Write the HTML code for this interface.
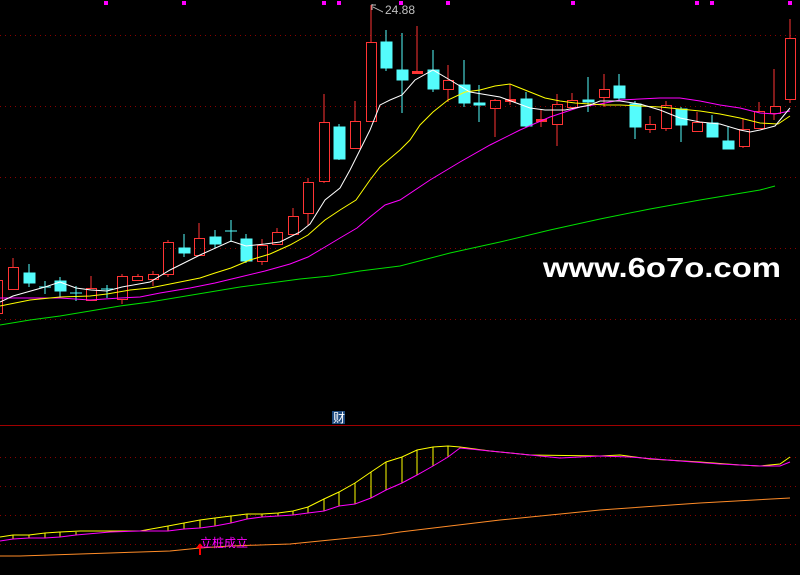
<!DOCTYPE html>
<html><head><meta charset="utf-8"><style>
html,body{margin:0;padding:0;background:#000;overflow:hidden}
svg{display:block}
</style></head><body>
<svg width="800" height="575" viewBox="0 0 800 575" xmlns="http://www.w3.org/2000/svg" shape-rendering="crispEdges">
<rect width="800" height="575" fill="#000"/>
<g stroke="#8a0000" stroke-width="1" stroke-dasharray="1,4">
<line x1="0" y1="35.5" x2="800" y2="35.5"/><line x1="0" y1="106.5" x2="800" y2="106.5"/>
<line x1="0" y1="177.5" x2="800" y2="177.5"/><line x1="0" y1="248.5" x2="800" y2="248.5"/>
<line x1="0" y1="319.5" x2="800" y2="319.5"/>
<line x1="0" y1="457.5" x2="800" y2="457.5"/><line x1="0" y1="486.5" x2="800" y2="486.5"/>
<line x1="0" y1="515.5" x2="800" y2="515.5"/><line x1="0" y1="544.5" x2="800" y2="544.5"/>
</g>
<line x1="0" y1="425.5" x2="800" y2="425.5" stroke="#a00000"/>
<g fill="#ff00ff">
<rect x="104" y="1" width="4" height="4"/><rect x="182" y="1" width="4" height="4"/><rect x="322" y="1" width="4" height="4"/><rect x="337" y="1" width="4" height="4"/><rect x="399" y="1" width="4" height="4"/><rect x="446" y="1" width="4" height="4"/><rect x="571" y="1" width="4" height="4"/><rect x="695" y="1" width="4" height="4"/><rect x="710" y="1" width="4" height="4"/><rect x="788" y="1" width="4" height="4"/>
</g>
<text x="385" y="14" fill="#c0c0c0" font-family="Liberation Sans, sans-serif" font-size="12">24.88</text>
<path d="M372 4 L372 10 M372 5 L376 5 M373 7 L383 12" stroke="#c0c0c0" fill="none"/>

<!-- red candles (hollow) -->
<g stroke="#ff3434" fill="none">
<path d="M-2 280V313M13 258V267M13 289V290M60 0"/><rect x="-8.5" y="280.5" width="11" height="33"/>
<rect x="8.5" y="267.5" width="10" height="22"/>
<path d="M91 276V288M117 0"/><rect x="86.5" y="288.5" width="10" height="12"/>
<path d="M122 274V276M122 299V304"/><rect x="117.5" y="276.5" width="10" height="23"/>
<path d="M138 274V276M138 280V281"/><rect x="132.5" y="276.5" width="10" height="4"/>
<path d="M153 271V274M153 279V286"/><rect x="148.5" y="274.5" width="10" height="5"/>
<path d="M168 240V242M168 274V277"/><rect x="163.5" y="242.5" width="10" height="32"/>
<path d="M199 223V238"/><rect x="194.5" y="238.5" width="10" height="17"/>
<path d="M262 239V245M262 261V265"/><rect x="257.5" y="245.5" width="10" height="16"/>
<path d="M277 228V232"/><rect x="272.5" y="232.5" width="10" height="12"/>
<path d="M293 208V216"/><rect x="288.5" y="216.5" width="10" height="18"/>
<path d="M308 178V182M308 213V225"/><rect x="303.5" y="182.5" width="10" height="31"/>
<path d="M324 94V122M324 181V183"/><rect x="319.5" y="122.5" width="10" height="59"/>
<path d="M355 101V121"/><rect x="350.5" y="121.5" width="10" height="27"/>
<path d="M371 5V42"/><rect x="366.5" y="42.5" width="10" height="79"/>
<path d="M417 26V73"/><rect x="412" y="71" width="11" height="3" fill="#ff3434" stroke="none"/>
<path d="M448 65V80M448 89V102"/><rect x="443.5" y="80.5" width="10" height="9"/>
<path d="M495 99V100M495 108V137"/><rect x="490.5" y="100.5" width="10" height="8"/>
<path d="M510 84V105"/><rect x="505" y="99" width="11" height="3" fill="#ff3434" stroke="none"/>
<path d="M541 110V127"/><rect x="536" y="119" width="11" height="3" fill="#ff3434" stroke="none"/>
<path d="M557 94V104M557 124V146"/><rect x="552.5" y="104.5" width="10" height="20"/>
<path d="M572 93V100M572 107V108"/><rect x="567.5" y="100.5" width="10" height="7"/>
<path d="M604 74V89M604 97V107"/><rect x="599.5" y="89.5" width="10" height="8"/>
<path d="M650 116V124M650 129V133"/><rect x="645.5" y="124.5" width="10" height="5"/>
<path d="M666 101V105M666 128V131"/><rect x="661.5" y="105.5" width="10" height="23"/>
<path d="M697 112V122"/><rect x="692.5" y="122.5" width="10" height="9"/>
<path d="M743 119V129M743 146V148"/><rect x="739.5" y="129.5" width="10" height="17"/>
<path d="M759 102V111"/><rect x="754.5" y="111.5" width="10" height="17"/>
<path d="M774 69V106M774 113V120"/><rect x="770.5" y="106.5" width="10" height="7"/>
<path d="M790 19V38M790 99V103"/><rect x="785.5" y="38.5" width="10" height="61"/>
</g>
<!-- cyan candles -->
<g stroke="#54fcfc" fill="#54fcfc">
<path d="M29 264V287M45 281V294M39 287H51M60 277V297M76 286V301M70 293H82M107 285V298M101 289H113M184 234V257M215 230V248M231 220V242M225 231H237M246 234V263M339 124V160M386 30V71M402 33V113M433 50V92M464 60V107M479 85V122M526 92V127M588 77V112M619 74V100M635 101V139M681 107V142M712 115V137M728 126V149" fill="none"/>
<rect x="24" y="273" width="11" height="10"/><rect x="55" y="281" width="11" height="10"/>
<rect x="179" y="248" width="11" height="5"/><rect x="210" y="237" width="11" height="7"/>
<rect x="241" y="239" width="11" height="22"/><rect x="334" y="127" width="11" height="32"/>
<rect x="381" y="42" width="11" height="26"/><rect x="397" y="70" width="11" height="10"/>
<rect x="428" y="70" width="11" height="19"/><rect x="459" y="85" width="11" height="18"/>
<rect x="474" y="103" width="11" height="2"/><rect x="521" y="99" width="11" height="27"/>
<rect x="583" y="100" width="11" height="2"/><rect x="614" y="86" width="11" height="12"/>
<rect x="630" y="104" width="11" height="23"/><rect x="676" y="109" width="11" height="16"/>
<rect x="707" y="123" width="11" height="14"/><rect x="723" y="141" width="11" height="8"/>
</g>
<g fill="none" stroke-width="1" shape-rendering="auto">
<polyline stroke="#00e000" points="0,325 30,320 60,316 90,311 120,306 150,302 180,297 210,292 240,287 270,283 300,279 330,276 360,271 400,266 450,253 500,242 550,230 600,219 650,209 700,200 730,195 760,190 775,186"/>
<polyline stroke="#ff00ff" points="0,298 60,298 90,300 120,298 140,297 160,293 190,288 215,283 240,277 265,271 290,264 308,257 325,247 340,238 357,228 370,217 385,205 400,200 430,180 460,162 490,145 520,130 550,117 580,107 600,104 620,100 640,99 660,98 680,98 700,101 720,105 740,108 760,113 775,114 790,111"/>
<polyline stroke="#ffff00" points="0,306 30,300 60,297 90,296 107,294 130,290 150,288 175,283 200,278 215,273 231,268 250,260 270,254 290,245 308,235 325,220 340,210 356,200 370,180 380,167 400,150 410,140 420,125 433,112 448,100 465,92 480,90 495,86 510,84 520,88 530,92 545,98 560,101 575,103 590,104 605,105 620,105 640,106 660,107 680,109 700,111 720,114 740,118 760,123 778,124 790,116"/>
<polyline stroke="#ffffff" points="0,302 13,296 45,287 60,282 76,288 91,290 107,291 122,287 150,282 170,270 200,255 231,241 246,246 265,244 280,242 300,232 310,224 325,200 340,188 350,170 360,150 370,130 380,105 390,100 402,95 415,80 433,70 450,80 470,92 500,97 530,108 545,110 565,110 590,105 600,101 620,101 640,104 660,110 680,118 700,122 720,124 740,130 750,132 760,130 775,126 790,108"/>
</g>
<text x="543" y="277" fill="#ffffff" font-family="Liberation Sans, sans-serif" font-weight="bold" font-size="28" textLength="238" lengthAdjust="spacingAndGlyphs">www.6o7o.com</text>

<!-- bottom panel -->
<rect x="332" y="411" width="13" height="13" fill="#1e4a7e"/>
<text x="333" y="422" fill="#ffffff" font-family="Noto Sans CJK SC, sans-serif" font-size="12">财</text>
<g stroke="#ffff00">
<path d="M13 535V539M29 535V538M45 533V538M60 532V537M76 532V535M168 526V531M184 523V529M200 520V528M215 518V526M231 516V523M247 514V519M262 514V517M278 513V516M293 511V515M308 507V513M324 499V511M339 492V506M355 483V504M371 472V498M386 462V490M402 457V483M417 450V475M433 447V466M448 446V457"/>
</g>
<g fill="none" shape-rendering="auto">
<polyline stroke="#ff8c28" points="0,556 20,556 50,555 80,554 110,553 140,552 170,551 200,548 230,546 260,545 290,544 320,541 350,538 380,535 400,532 500,520 600,510 700,503 790,498"/>
<polyline stroke="#ffff00" points="0,537 13,535 29,535 45,533 60,532 80,531 110,531 140,531 168,526 184,523 200,520 215,518 231,516 247,514 262,514 278,513 293,511 308,507 324,499 339,492 355,483 371,472 386,462 402,457 417,450 433,447 448,446 460,447 490,451 530,455 600,456 620,455 650,459 700,462 740,465 760,466 780,464 790,457"/>
<polyline stroke="#ff00ff" points="0,541 13,539 29,538 45,538 60,537 76,535 110,532 140,531 168,531 184,529 200,528 215,526 231,523 247,519 262,517 278,516 293,515 308,513 324,511 339,506 355,504 371,498 386,490 402,483 417,475 433,466 448,457 460,448 490,451 530,455 560,458 600,456 630,457 680,461 720,464 760,466 780,466 790,462"/>
</g>
<path d="M200 543L196 548H199V555H201V548H204Z" fill="#ff0000"/>
<text x="200" y="547" fill="#ff00ff" font-family="Noto Sans CJK SC, sans-serif" font-size="12">立桩成立</text>
</svg>
</body></html>
